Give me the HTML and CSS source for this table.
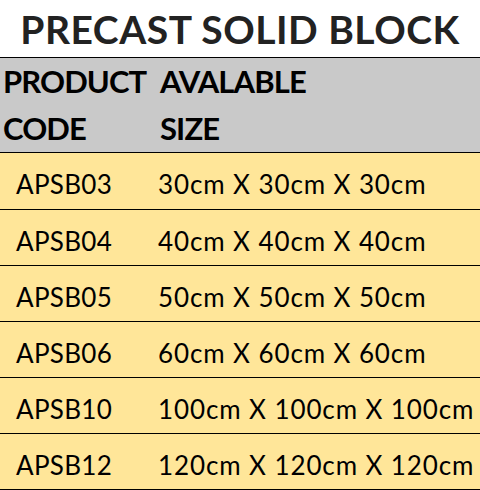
FILE: index.html
```html
<!DOCTYPE html>
<html>
<head>
<meta charset="utf-8">
<link rel="stylesheet" href="styles.css">
</head>
<body>
<div class="sheet">
  <div class="title">PRECAST SOLID BLOCK</div>
  <div class="table">
    <div class="head">
      <div class="hcell">PRODUCT<br>CODE</div>
      <div class="hcell">AVALABLE<br>SIZE</div>
    </div>
    <div class="row first"><div class="code">APSB03</div><div class="size">30cm X 30cm X 30cm</div></div>
    <div class="row"><div class="code">APSB04</div><div class="size">40cm X 40cm X 40cm</div></div>
    <div class="row"><div class="code">APSB05</div><div class="size">50cm X 50cm X 50cm</div></div>
    <div class="row"><div class="code">APSB06</div><div class="size">60cm X 60cm X 60cm</div></div>
    <div class="row"><div class="code">APSB10</div><div class="size">100cm X 100cm X 100cm</div></div>
    <div class="row"><div class="code">APSB12</div><div class="size">120cm X 120cm X 120cm</div></div>
  </div>
</div>
</body>
</html>
```
FILE: styles.css
```css
html, body {
  margin: 0;
  padding: 0;
  background: #ffffff;
}
.sheet {
  width: 480px;
  height: 490px;
  overflow: hidden;
  font-family: "Lato", "Open Sans", sans-serif;
}
.title {
  height: 57px;
  box-sizing: border-box;
  text-align: center;
  font-weight: 700;
  font-size: 39px;
  line-height: 58px;
  letter-spacing: 0.5px;
  color: #222222;
  white-space: nowrap;
}
.table {
  border-top: 1px solid #000;
}
.head {
  display: grid;
  grid-template-columns: 157px 1fr;
  background: #c9c9c9;
  height: 95px;
  box-sizing: border-box;
  border-bottom: 1px solid #000;
}
.hcell {
  font-weight: 700;
  font-size: 31px;
  line-height: 47px;
  letter-spacing: -0.9px;
  padding-left: 3px;
  color: #000;
  white-space: nowrap;
}
.row {
  display: grid;
  grid-template-columns: 157px 1fr;
  align-items: center;
  background: #ffe699;
  height: 56px;
  box-sizing: border-box;
  border-bottom: 1px solid #000;
  font-size: 26px;
  letter-spacing: 0.9px;
  color: #000;
  white-space: nowrap;
  padding-top: 6px;
}
.row.first {
  height: 57px;
}
.code {
  padding-left: 16px;
  letter-spacing: 0.3px;
}
.size {
  padding-left: 1px;
}
```
